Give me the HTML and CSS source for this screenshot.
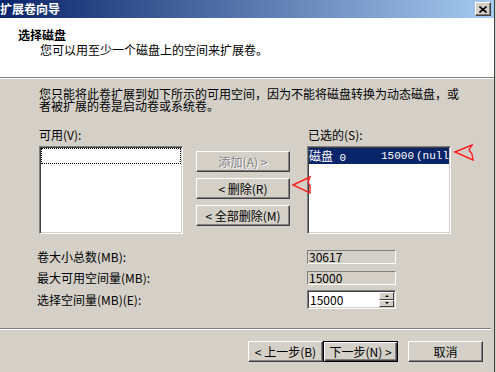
FILE: index.html
```html
<!DOCTYPE html>
<html lang="zh-CN">
<head>
  <meta charset="UTF-8">
  <title>扩展卷向导</title>
  <link rel="stylesheet" href="styles.css">
</head>
<body>
  <div class="window">
    <div class="titlebar">
      <span class="title">扩展卷向导</span>
      <span class="close">
        <svg width="8" height="7" viewBox="0 0 8 7"><path d="M0.5 0.5 L7.5 6.5 M7.5 0.5 L0.5 6.5" stroke="#000" stroke-width="1.6" fill="none"/></svg>
      </span>
    </div>

    <div class="header">
      <div class="h-title">选择磁盘</div>
      <div class="h-sub">您可以用至少一个磁盘上的空间来扩展卷。</div>
    </div>

    <div class="main">
      <p class="intro">您只能将此卷扩展到如下所示的可用空间，因为不能将磁盘转换为动态磁盘，或<br>者被扩展的卷是启动卷或系统卷。</p>

      <div class="pick">
        <div class="col">
          <div class="lbl">可用(V):</div>
          <div class="listbox">
            <div class="row focus"></div>
          </div>
        </div>
        <div class="mid">
          <button class="btn" disabled>添加(A) &gt;</button>
          <button class="btn">&lt; 删除(R)</button>
          <button class="btn">&lt; 全部删除(M)</button>
        </div>
        <div class="col">
          <div class="lbl right">已选的(S):</div>
          <div class="listbox">
            <div class="row sel"><span class="c1"><span class="cjk">磁盘</span> 0</span><span class="c2">15000</span><span class="c3">(null)</span></div>
          </div>
        </div>
      </div>

      <div class="fields">
        <div class="field f1">
          <span class="flabel">卷大小总数(MB):</span>
          <span class="ro">30617</span>
        </div>
        <div class="field f2">
          <span class="flabel">最大可用空间量(MB):</span>
          <span class="ro">15000</span>
        </div>
        <div class="field f3">
          <span class="flabel">选择空间量(MB)(E):</span>
          <div class="spin">
            <span class="spin-val">15000</span>
            <div class="spin-btns">
              <span class="up"></span>
              <span class="down"></span>
            </div>
          </div>
        </div>
      </div>
    </div>

    <div class="footer">
      <button class="fbtn">&lt; 上一步(B)</button>
      <button class="fbtn next">下一步(N) &gt;</button>
      <button class="fbtn cancel">取消</button>
    </div>

    <svg class="marks" width="496" height="372" viewBox="0 0 496 372">
      <polygon points="293,185 310,177 308,182 310,186 310,193" fill="none" stroke="#ff2020" stroke-width="1.4"/>
      <polygon points="455,152 472,145 469,150 472,154 473,160" fill="none" stroke="#ff2020" stroke-width="1.4"/>
    </svg>
  </div>
</body>
</html>
```

FILE: styles.css
```css
body {
  margin: 0;
  background: #d4d0c8;
  font-family: "Noto Sans CJK SC", "Noto Sans", sans-serif;
  font-size: 12px;
  color: #000;
}
.window {
  position: relative;
  width: 494px;
  height: 372px;
  border-right: 1px solid #404040;
  overflow: hidden;
}
.titlebar {
  height: 18px;
  box-sizing: border-box;
  padding-right: 3px;
  background: linear-gradient(to right, #0a246a, #a6caf0);
  display: flex;
  align-items: center;
  justify-content: space-between;
}
.title {
  color: #fff;
  font-weight: bold;
  line-height: 18px;
}
.close {
  width: 16px;
  height: 14px;
  box-sizing: border-box;
  background: #d4d0c8;
  border: 1px solid;
  border-color: #fff #404040 #404040 #fff;
  box-shadow: inset -1px -1px #808080;
  display: flex;
  align-items: center;
  justify-content: center;
}
.header {
  height: 60px;
  box-sizing: border-box;
  background: #fff;
  border-bottom: 1px solid #808080;
  padding: 10px 0 0 18px;
}
.h-title {
  font-weight: bold;
  line-height: 14px;
}
.h-sub {
  line-height: 14px;
  margin: 1px 0 0 22px;
}
.main {
  height: 250px;
  box-sizing: border-box;
  border-top: 1px solid #fff;
  padding: 10px 0 0 39px;
}
.intro {
  margin: 0;
  line-height: 12px;
  position: relative;
  top: -1px;
}
.pick {
  display: flex;
  margin-top: 16px;
}
.col {
  width: 144px;
}
.lbl {
  height: 12px;
  line-height: 12px;
  margin-bottom: 5px;
}
.lbl.right {
  padding-left: 1px;
}
.listbox {
  height: 88px;
  box-sizing: border-box;
  background: #fff;
  border: 1px solid;
  border-color: #808080 #fff #fff #808080;
  box-shadow: inset 1px 1px #404040, inset -1px -1px #d4d0c8;
  padding: 1px;
}
.row {
  height: 16px;
  line-height: 16px;
  display: flex;
  white-space: nowrap;
  overflow: hidden;
  box-sizing: border-box;
}
.row.focus {
  border: 1px dotted #000;
}
.row.sel {
  background: #0a246a;
  color: #fff;
  font-family: "Liberation Mono", "Noto Sans CJK SC", monospace;
  font-size: 11px;
}
.row.sel .cjk {
  font-family: "Noto Sans CJK SC", sans-serif;
  font-size: 12px;
}
.c1 {
  width: 72px;
  flex: none;
}
.c2 {
  width: 35px;
  flex: none;
}
.mid {
  width: 94px;
  margin: 0 17px 0 13px;
  padding-top: 22px;
  display: flex;
  flex-direction: column;
  gap: 6px;
}
.btn,
.fbtn {
  height: 21px;
  box-sizing: border-box;
  padding: 0;
  font: inherit;
  line-height: 1;
  color: #000;
  background: #d4d0c8;
  border: 1px solid;
  border-color: #fff #404040 #404040 #fff;
  box-shadow: inset -1px -1px #808080;
  display: flex;
  align-items: center;
  justify-content: center;
}
.btn:disabled {
  color: #808080;
  text-shadow: 1px 1px 0 #fff;
}
.fields {
  margin: 16px 0 0 -2px;
}
.field {
  display: flex;
  align-items: center;
}
.f2 {
  margin-top: 7px;
}
.f3 {
  margin-top: 5px;
}
.flabel {
  width: 270px;
  line-height: 14px;
}
.ro {
  width: 89px;
  height: 14px;
  box-sizing: border-box;
  border: 1px solid;
  border-color: #808080 #fff #fff #808080;
  padding-left: 1px;
  line-height: 12px;
}
.spin {
  width: 89px;
  height: 19px;
  box-sizing: border-box;
  background: #fff;
  border: 1px solid;
  border-color: #808080 #fff #fff #808080;
  box-shadow: inset 1px 1px #404040, inset -1px -1px #d4d0c8;
  padding: 1px;
  display: flex;
}
.spin-val {
  flex: 1;
  padding-left: 1px;
  line-height: 15px;
}
.spin-btns {
  width: 15px;
  display: flex;
  flex-direction: column;
}
.spin-btns span {
  flex: 1;
  box-sizing: border-box;
  background: #d4d0c8;
  border: 1px solid;
  border-color: #fff #404040 #404040 #fff;
  display: flex;
  align-items: center;
  justify-content: center;
}
.spin-btns .up::after {
  content: "";
  border-left: 2px solid transparent;
  border-right: 2px solid transparent;
  border-bottom: 2px solid #000;
}
.spin-btns .down::after {
  content: "";
  border-left: 2px solid transparent;
  border-right: 2px solid transparent;
  border-top: 2px solid #000;
}
.footer {
  margin-right: 3px;
  border-top: 1px solid #808080;
  box-shadow: inset 0 1px #fff;
  padding: 12px 0 0 248px;
  display: flex;
}
.fbtn {
  width: 75px;
}
.fbtn.next {
  border: 1px solid #000;
  box-shadow: inset 1px 1px #fff, inset -1px -1px #404040, inset -2px -2px #808080;
}
.fbtn.cancel {
  margin-left: 10px;
}
.marks {
  position: absolute;
  left: 0;
  top: 0;
  pointer-events: none;
}
```
